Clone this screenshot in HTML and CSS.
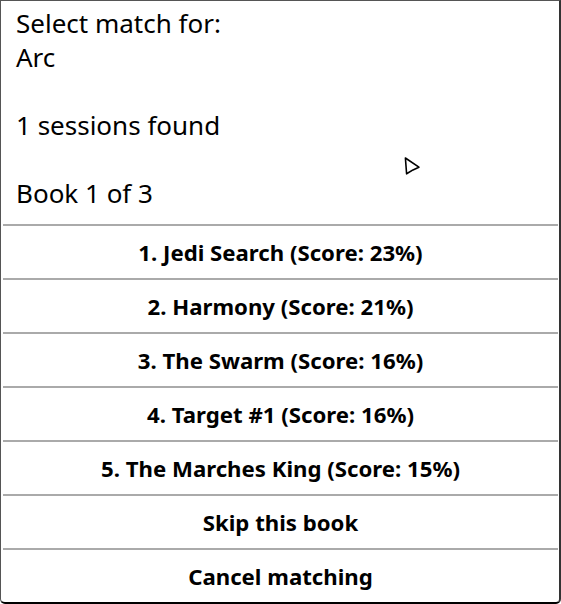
FILE: index.html
```html
<!DOCTYPE html>
<html>
<head>
<meta charset="utf-8">
<link rel="stylesheet" href="styles.css">
</head>
<body>
<div class="dialog">
  <div class="header">
    <p class="line">Select match for:</p>
    <p class="line">Arc</p>
    <p class="line">&nbsp;</p>
    <p class="line">1 sessions found</p>
    <p class="line">&nbsp;</p>
    <p class="line">Book 1 of 3</p>
  </div>
  <div class="buttons">
    <div class="btn">1. Jedi Search (Score: 23%)</div>
    <div class="btn">2. Harmony (Score: 21%)</div>
    <div class="btn">3. The Swarm (Score: 16%)</div>
    <div class="btn">4. Target #1 (Score: 16%)</div>
    <div class="btn">5. The Marches King (Score: 15%)</div>
    <div class="btn">Skip this book</div>
    <div class="btn">Cancel matching</div>
  </div>
  <svg class="cursor" width="20" height="22" viewBox="0 0 20 22">
    <path d="M3.4 3 L16.9 12.2 L11 14.9 L4.6 18.8 Z" fill="#fff" stroke="#000" stroke-width="1.6" stroke-linejoin="round"/>
  </svg>
</div>
</body>
</html>
```
FILE: styles.css
```css
html, body {
  margin: 0;
  padding: 0;
  background: #fff;
}
body {
  width: 561px;
  height: 604px;
  overflow: hidden;
  font-family: "Noto Sans", "DejaVu Sans", sans-serif;
  color: #000;
}
.dialog {
  position: relative;
  box-sizing: border-box;
  width: 561px;
  height: 604px;
  border-top: 1px solid #555;
  border-left: 1px solid #555;
  border-right: 2px solid #333;
  border-bottom: 2px solid #000;
  border-radius: 0 0 5px 5px;
  display: flex;
  flex-direction: column;
}
.header {
  box-sizing: border-box;
  height: 223px;
  padding: 5px 15px 14px;
}
.line {
  margin: 0;
  font-size: 26px;
  line-height: 34px;
  white-space: nowrap;
}
.buttons {
  display: flex;
  flex-direction: column;
}
.btn {
  height: 52px;
  border-top: 2px solid #aaa;
  margin: 0 1px 0 2px;
  display: flex;
  align-items: center;
  justify-content: center;
  font-size: 22.2px;
  font-weight: bold;
}
.cursor {
  position: absolute;
  left: 401px;
  top: 154px;
}
```
